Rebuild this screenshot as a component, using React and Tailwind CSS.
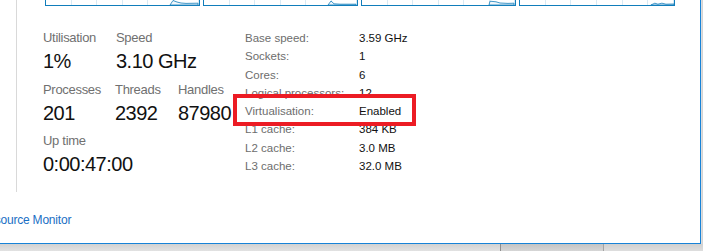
import React from 'react';

const graphs = [
  { w: 'w-[155px]', d: 'M124,5 L127,0.5 L131,2 L135,3 L140,3.4 L152,3.2 L152,5 Z' },
  { w: 'w-[155px]', d: 'M124,5 L127,1 L130,3.8 L136,4.2 L152,4.2 L152,5 Z' },
  { w: 'w-[155px]', d: 'M127,5 L128,1.2 L134,1.8 L138,3 L146,3.4 L152,3.2 L152,5 Z' },
  { w: 'w-[156px]', d: 'M130,5 L134,3.2 L137,4.2 L141,3.2 L145,4.2 L153,4 L153,5 Z' },
];

const specs = [
  ['Base speed:', '3.59 GHz'],
  ['Sockets:', '1'],
  ['Cores:', '6'],
  ['Logical processors:', '12'],
  ['Virtualisation:', 'Enabled'],
  ['L1 cache:', '384 KB'],
  ['L2 cache:', '3.0 MB'],
  ['L3 cache:', '32.0 MB'],
];

const Stat = ({ label, value, className = '' }) => (
  <div className={className}>
    <div className="text-[13px] leading-[16px] tracking-[-0.3px] text-[#707070]">{label}</div>
    <div className="mt-[3px] text-[20px] leading-[24px] tracking-[-0.5px] text-[#111]">{value}</div>
  </div>
);

const Graph = ({ w, d }) => (
  <div className={`${w} h-[6px] relative border-x border-b border-[#117dbb] flex`}>
    {[0, 1, 2, 3, 4, 5].map((i) => (
      <div key={i} className="flex-1 border-r border-[#d9eaf4] last:border-r-0" />
    ))}
    <svg className="absolute inset-0 w-full h-full" viewBox="0 0 153 5" preserveAspectRatio="none">
      <path d={d} fill="#f1f6fa" stroke="#117dbb" strokeWidth="0.8" />
    </svg>
  </div>
);

export default function App() {
  return (
    <div className="relative w-[703px] h-[251px] overflow-hidden bg-[#d6d6d6] font-['Liberation_Sans',Arial,sans-serif]">
      <div className="flex">
        <div className="w-[701px] h-[244px] bg-white border-r border-b border-[#1883d7] flex flex-col">
          <div className="flex h-[192px]">
            <div className="w-[17px] shrink-0 border-r border-[#d9d9d9]" />
            <div className="flex-1">
              <div className="flex gap-[3px] pl-[28px]">
                {graphs.map((g, i) => (
                  <Graph key={i} {...g} />
                ))}
              </div>

              <div className="flex mt-[24px]">
                <div className="ml-[26px] w-[202px] shrink-0">
                  <div className="flex">
                    <Stat className="w-[73px]" label="Utilisation" value="1%" />
                    <Stat label="Speed" value="3.10 GHz" />
                  </div>
                  <div className="flex mt-[8.5px]">
                    <Stat className="w-[72px]" label="Processes" value="201" />
                    <Stat className="w-[63px]" label="Threads" value="2392" />
                    <Stat label="Handles" value="87980" />
                  </div>
                  <Stat className="mt-[8.5px]" label="Up time" value="0:00:47:00" />
                </div>

                <div className="grid grid-cols-[114px_auto] text-[11.5px] leading-[17.9px]">
                  {specs.map(([k, v]) => (
                    <React.Fragment key={k}>
                      <div className="text-[#6d6d6d]">{k}</div>
                      <div className="text-[#111]">{v}</div>
                    </React.Fragment>
                  ))}
                </div>
              </div>
            </div>
          </div>

          <div className="mt-[20px] overflow-hidden">
            <a className="block ml-[-52px] whitespace-nowrap text-[12px] leading-[16px] tracking-[-0.2px] text-[#1a6fc4]">
              Open Resource Monitor
            </a>
          </div>
        </div>
        <div className="flex-1 h-[244px] bg-gradient-to-r from-[#e0e0e0] to-[#cfcfcf]" />
      </div>

      <div className="flex h-[7px]">
        <div className="w-[500px] bg-gradient-to-b from-[#d2d2d2] to-[#e2e2e2]" />
        <div className="w-[103px] border-l border-[#8e8e8e] bg-gradient-to-b from-[#c4c4c4] to-[#d6d6d6]" />
        <div className="flex-1 border-l border-[#a4a4a4] bg-gradient-to-b from-[#d0d0d0] to-[#dedede]" />
      </div>

      <div className="absolute left-[233px] top-[94px] w-[183px] h-[32px] border-4 border-[#ec1c24]" />
    </div>
  );
}
